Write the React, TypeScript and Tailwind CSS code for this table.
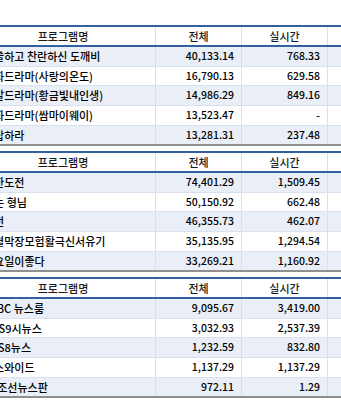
import React from "react";

type Row = [string, string, string];

const tables: Row[][] = [
  [
    ["쓸쓸하고 찬란하신 도깨비", "40,133.14", "768.33"],
    ["월화드라마(사랑의온도)", "16,790.13", "629.58"],
    ["주말드라마(황금빛내인생)", "14,986.29", "849.16"],
    ["월화드라마(쌈마이웨이)", "13,523.47", "-"],
    ["응답하라", "13,281.31", "237.48"],
  ],
  [
    ["무한도전", "74,401.29", "1,509.45"],
    ["아는 형님", "50,150.92", "662.48"],
    ["썰전", "46,355.73", "462.07"],
    ["열혈막장모험활극신서유기", "35,135.95", "1,294.54"],
    ["일요일이좋다", "33,269.21", "1,160.92"],
  ],
  [
    ["JTBC 뉴스룸", "9,095.67", "3,419.00"],
    ["KBS9시뉴스", "3,032.93", "2,537.39"],
    ["SBS8뉴스", "1,232.59", "832.80"],
    ["뉴스와이드", "1,137.29", "1,137.29"],
    ["TV조선뉴스판", "972.11", "1.29"],
  ],
];

// row heights vary a pixel like the sheet does
const rowHeights = ["h-[20px]", "h-[19px]", "h-[20px]", "h-[20px]", "h-[20px]"];

function RatingTable({ rows }: { rows: Row[] }) {
  return (
    <div className="ml-[-29px] w-[370px] border-t-2 border-[#34609f]">
      {/* Header */}
      <div className="flex h-[20px] border-b-2 border-[#34609f] bg-white text-[11px] text-[#1a1a1a]">
        <div className="w-[185px] shrink-0 border-r border-[#d5dff0] flex items-center justify-center">
          프로그램명
        </div>
        <div className="w-[86px] shrink-0 border-r border-[#d5dff0] flex items-center justify-center">
          전체
        </div>
        <div className="w-[86px] shrink-0 border-r border-[#d5dff0] flex items-center justify-center">
          실시간
        </div>
        <div className="flex-1" />
      </div>

      {/* Rows */}
      {rows.map((r, i) => (
        <div
          key={i}
          className={`flex ${rowHeights[i]} ${
            i === rows.length - 1 ? "border-b-2 border-[#8f8f8f]" : "border-b border-[#d9e0ee]"
          } ${i % 2 === 0 ? "bg-[#e9eef7]" : "bg-white"} text-black`}
        >
          <div className="w-[185px] shrink-0 border-r border-[#d5dff0] flex items-center pl-[13px] text-[11px] whitespace-nowrap overflow-hidden">
            {r[0]}
          </div>
          <div className="w-[86px] shrink-0 border-r border-[#d5dff0] flex items-center justify-end pr-[7px] text-[10.5px]">
            {r[1]}
          </div>
          <div className="w-[86px] shrink-0 border-r border-[#d5dff0] flex items-center justify-end pr-[7px] text-[10.5px]">
            {r[2]}
          </div>
          <div className="flex-1" />
        </div>
      ))}
    </div>
  );
}

export default function App(): React.JSX.Element {
  return (
    <div className="w-[341px] h-[400px] overflow-hidden bg-white pt-[25px] font-['Noto_Sans_CJK_KR','Noto_Sans',sans-serif] font-medium leading-none">
      <div className="flex flex-col gap-[5px]">
        {tables.map((rows, i) => (
          <RatingTable key={i} rows={rows} />
        ))}
      </div>
    </div>
  );
}
